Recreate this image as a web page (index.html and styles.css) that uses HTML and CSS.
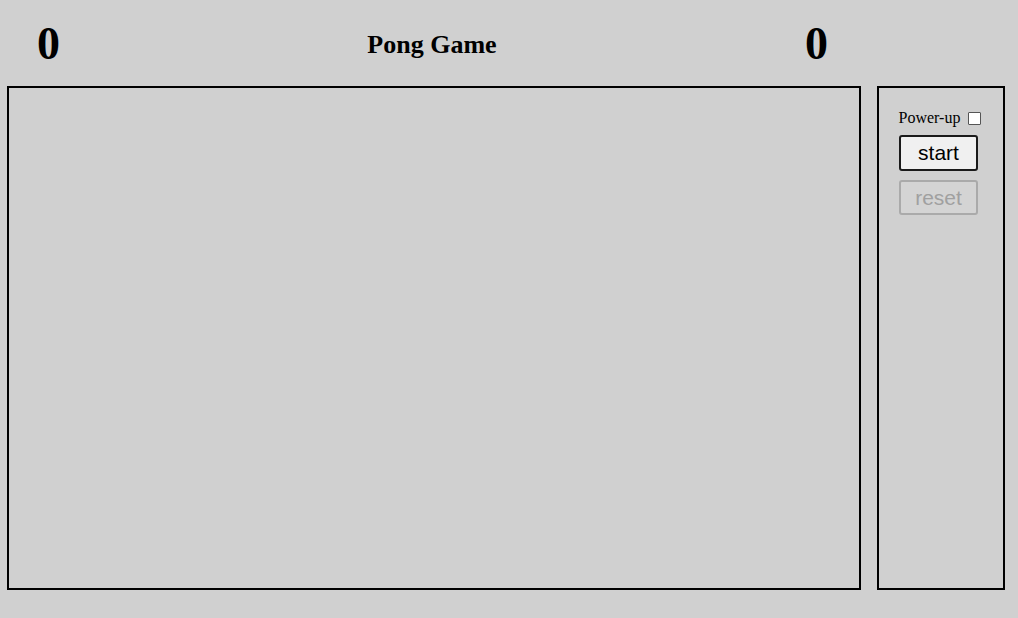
FILE: index.html
```html
<!DOCTYPE html>
<html>
<head>
<meta charset="utf-8">
<title>Pong Game</title>
<link rel="stylesheet" href="styles.css">
</head>
<body>
<header class="top">
  <div class="score score-left">0</div>
  <h1 class="title">Pong Game</h1>
  <div class="score score-right">0</div>
</header>
<main class="main">
  <div class="board"></div>
  <aside class="panel">
    <label class="powerup">Power-up <span class="check"></span></label>
    <button class="btn">start</button>
    <button class="btn btn-disabled" disabled>reset</button>
  </aside>
</main>
</body>
</html>
```

FILE: styles.css
```css
html, body {
  margin: 0;
  padding: 0;
  background: #d0d0d0;
  font-family: "Liberation Serif", "Times New Roman", serif;
  color: #000;
}
.top {
  height: 86px;
  width: 854px;
  margin-left: 7px;
  display: flex;
  align-items: center;
  justify-content: space-between;
  box-sizing: border-box;
  padding: 2px 34px 0 30px;
}
.score {
  font-size: 46px;
  font-weight: bold;
  line-height: 1;
  width: 22px;
  text-align: center;
}
.title {
  margin: 0;
  font-size: 26px;
  font-weight: bold;
  padding-top: 2px;
}
.main {
  display: flex;
  gap: 16px;
  margin-left: 7px;
}
.board {
  width: 850px;
  height: 500px;
  border: 2px solid #000;
}
.panel {
  width: 128px;
  height: 504px;
  box-sizing: border-box;
  border: 2px solid #000;
  display: flex;
  flex-direction: column;
  align-items: center;
  padding: 21px 5px 0 0;
}
.powerup {
  font-size: 16px;
  display: flex;
  align-items: center;
  gap: 8px;
  margin-left: 3px;
}
.check {
  display: inline-block;
  width: 11px;
  height: 11px;
  border: 1px solid #555;
  background: #fff;
  border-radius: 1px;
}
.btn {
  margin-top: 8px;
  width: 79px;
  height: 36px;
  font-family: "Liberation Sans", Arial, sans-serif;
  font-size: 21px;
  background: #f0f0f0;
  border: 2px solid #1a1a1a;
  border-radius: 3px;
  color: #000;
  padding: 0;
}
.btn-disabled {
  margin-top: 9px;
  height: 35px;
  background: #d4d4d4;
  border-color: #aaa;
  color: #a0a0a0;
}
```
